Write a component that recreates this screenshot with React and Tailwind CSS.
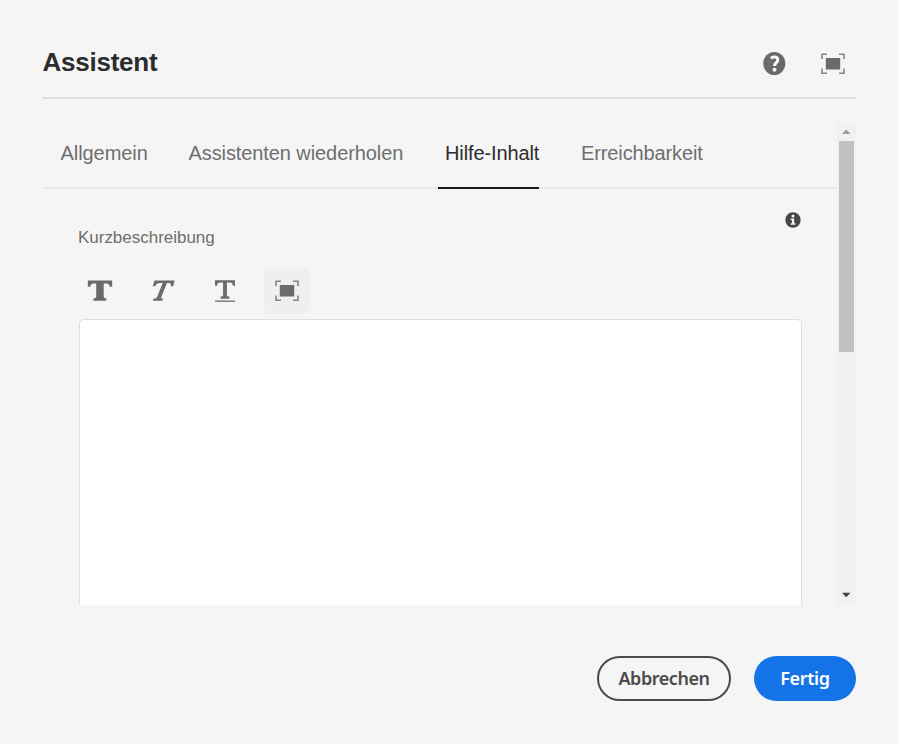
import React from "react";

function FrameIcon() {
  return (
    <svg width="24" height="22" viewBox="0 0 24 22" fill="none" stroke="#858585" strokeWidth="1.6">
      <path d="M1 6V1.200H6M18 1.200H23V6M23 15.500V20.300H18M6 20.300H1V15.500" />
      <rect x="4.800" y="5" width="14.400" height="11.500" fill="#6b6b6b" stroke="none" />
    </svg>
  );
}

function HelpIcon() {
  return (
    <svg width="23" height="24" viewBox="0 0 23 24" fill="none">
      <ellipse cx="11.300" cy="11.500" rx="11" ry="11.500" fill="#6a6a6a" />
      <path d="M7.800 6.200C10.300 4.300 14.800 4.600 14.800 7.900C14.800 10.600 11.500 10.600 11.500 14" stroke="#f8f8f8" strokeWidth="3" />
      <circle cx="11.500" cy="17.700" r="2" fill="#f8f8f8" />
    </svg>
  );
}

function InfoIcon() {
  return (
    <svg width="16" height="16" viewBox="0 0 16 16">
      <circle cx="8" cy="8" r="7.700" fill="#474747" />
      <circle cx="8" cy="3.900" r="1.500" fill="#f4f4f4" />
      <path d="M5.700 6.400H9.200V11.300H10.500V12.800H5.600V11.300H6.900V7.900H5.700Z" fill="#f4f4f4" />
    </svg>
  );
}

function BoldIcon() {
  return (
    <svg width="26" height="22" viewBox="0 0 26 22" fill="#6b6b6b">
      <path d="M.8 .5H25.200V6.700H22.600C22.400 4.300 21.800 3.500 19.500 3.500H16.700V16.500C16.700 17.900 17.200 18.200 19.300 18.200V20.800H6.500V18.200C8.700 18.200 9.200 17.900 9.200 16.500V3.500H6.500C4.200 3.500 3.600 4.300 3.400 6.700H.8Z" />
    </svg>
  );
}

function ItalicIcon() {
  return (
    <svg width="24" height="22" viewBox="0 0 24 22" fill="#6b6b6b">
      <path d="M3.400 .5H23.600L22.200 6.300H19.900C20.200 3.900 19.700 3 17.600 3H15.900L10.300 17C9.900 18.100 10.300 18.500 12 18.500L11.400 20.700H2L2.600 18.500C5 18.500 5.600 18.100 6.100 17L11.700 3H9.200C6.600 3 5.200 3.900 4.100 6.300H1.700Z" />
    </svg>
  );
}

function UnderlineIcon() {
  return (
    <svg width="22" height="24" viewBox="0 0 22 24" fill="#6b6b6b">
      <path d="M1 1.200H21V6.800H18.800C18.600 4.400 18.100 3.500 16 3.500H12.900V16C12.900 17.300 13.400 17.500 15.400 17.500V19.700H6.600V17.500C8.600 17.500 9.100 17.300 9.100 16V3.500H6C3.900 3.500 3.400 4.400 3.200 6.800H1Z" />
      <rect x="1" y="21.500" width="20" height="1.300" />
    </svg>
  );
}

export default function App() {
  return (
    <div className="h-[744px] w-[898px] overflow-hidden bg-[#f5f5f5] px-[42px] font-['Liberation_Sans',Arial,sans-serif] text-[#6e6e6e]">
      <header className="flex h-[99px] items-start justify-between border-b-2 border-[#dfdfdf]">
        <h1 className="mt-[46px] ml-[0.5px] text-[26px] leading-8 font-bold tracking-[-0.25px] text-[#2c2c2c]">Assistent</h1>
        <div className="mt-[52px] mr-[11px] flex items-center gap-[35px]">
          <button aria-label="Hilfe"><HelpIcon /></button>
          <button aria-label="Vollbild"><FrameIcon /></button>
        </div>
      </header>

      <div className="mt-[23px] flex h-[483px] w-[814px] overflow-hidden">
        <main className="w-[795px]">
          <nav className="flex h-[67px] border-b-2 border-[#e9e9e9] pl-[18.500px] text-[20px] leading-[62px] whitespace-nowrap">
            <button className="flex w-[128px] tracking-[-0.06px]">Allgemein</button>
            <button className="flex w-[249.500px] tracking-[-0.09px]">Assistenten wiederholen</button>
            <button className="flex h-[67px] w-[101px] border-b-2 border-[#161616] pl-[7px] tracking-[-0.12px] text-[#2c2c2c]">Hilfe-Inhalt</button>
            <button className="ml-[42px] flex tracking-[-0.12px]">Erreichbarkeit</button>
          </nav>
          <section className="pl-[36px]">
            <div className="flex h-[79px] justify-between pt-[23px] pr-[36px]">
              <label className="mt-[14px] text-[17px] leading-6 tracking-[-0.02px]">Kurzbeschreibung</label>
              <InfoIcon />
            </div>
            <div className="flex h-[46px] items-center">
              <button className="ml-[9px]" aria-label="Fett"><BoldIcon /></button>
              <button className="ml-[38px]" aria-label="Kursiv"><ItalicIcon /></button>
              <button className="ml-[39px]" aria-label="Unterstrichen"><UnderlineIcon /></button>
              <button className="ml-[28px] flex h-[46px] w-[45px] items-center justify-center rounded-md bg-[#efefef]" aria-label="Vollbild"><FrameIcon /></button>
            </div>
            <div className="mt-[5px] ml-px h-[320px] w-[722.500px] rounded-[5px] border border-[#dedede] bg-white" />
          </section>
        </main>
        <div className="flex w-[19px] flex-col items-center bg-[#f1f1f1]">
          <svg className="shrink-0" width="19" height="19" viewBox="0 0 19 19"><path d="M5 12L9.200 7.500L13.500 12Z" fill="#9c9c9c" /></svg>
          <div className="h-[211px] w-[15px] bg-[#c1c1c1]" />
          <svg className="mt-auto shrink-0" width="19" height="20" viewBox="0 0 19 20"><path d="M5 7.800L9.200 12.300L13.500 7.800Z" fill="#444" /></svg>
        </div>
      </div>

      <footer className="mt-[51px] flex justify-end gap-[23px] font-['Noto_Sans',sans-serif] text-[18px] leading-none font-semibold whitespace-nowrap">
        <button className="flex h-[45px] w-[134px] items-center justify-center rounded-full border-2 border-[#4b4b4b] pb-[2px] tracking-[-0.45px] text-[#4b4b4b]">Abbrechen</button>
        <button className="flex h-[45px] w-[102px] items-center justify-center rounded-full bg-[#1473e6] pb-[2px] tracking-[-0.35px] text-white">Fertig</button>
      </footer>
    </div>
  );
}
